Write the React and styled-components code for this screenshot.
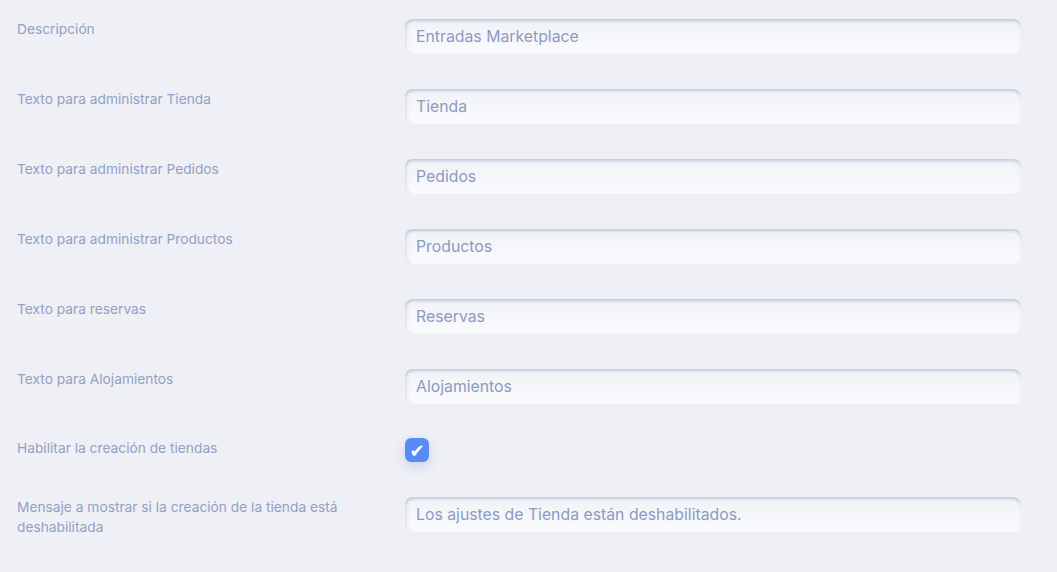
import React from 'react'
import styled, { createGlobalStyle } from 'styled-components'

const GlobalStyle = createGlobalStyle`
  body {
    margin: 0;
    background: #eef0f5;
    font-family: Inter, "Noto Sans", sans-serif;
  }
`

const fields = [
  { label: 'Descripción', value: 'Entradas Marketplace' },
  { label: 'Texto para administrar Tienda', value: 'Tienda' },
  { label: 'Texto para administrar Pedidos', value: 'Pedidos' },
  { label: 'Texto para administrar Productos', value: 'Productos' },
  { label: 'Texto para reservas', value: 'Reservas' },
  { label: 'Texto para Alojamientos', value: 'Alojamientos' },
]

function App() {
  return (
    <Page>
      <GlobalStyle />
      {fields.map((f) => (
        <Row key={f.label}>
          <Label>{f.label}</Label>
          <Input defaultValue={f.value} />
        </Row>
      ))}
      <CheckRow>
        <Label>Habilitar la creación de tiendas</Label>
        <Check>✔</Check>
      </CheckRow>
      <Row>
        <Label>Mensaje a mostrar si la creación de la tienda está deshabilitada</Label>
        <Input defaultValue="Los ajustes de Tienda están deshabilitados." />
      </Row>
    </Page>
  )
}

export default App

const Page = styled.div`
  min-height: 100vh;
  padding: 19px 36px 0 17px;
  box-sizing: border-box;
  display: flex;
  flex-direction: column;
  gap: 35px;
`

const Row = styled.div`
  display: flex;
  align-items: flex-start;
`

const CheckRow = styled(Row)`
  margin-top: -1px;
`

const Label = styled.div`
  width: 388px;
  flex-shrink: 0;
  padding-right: 50px;
  box-sizing: border-box;
  font-size: 13.75px;
  line-height: 20px;
  color: #93a0c4;
`

const Input = styled.input`
  flex: 1;
  height: 35px;
  box-sizing: border-box;
  border: none;
  outline: none;
  border-radius: 8px;
  padding: 0 11px 1px;
  font-family: Inter, "Noto Sans", sans-serif;
  font-size: 15.8px;
  color: #8d9ac0;
  background: linear-gradient(180deg, #f1f2f7 0%, #fafbfd 100%);
  box-shadow: inset 0 3px 3px -1px rgba(165, 175, 208, 0.6),
    inset 3px 0 4px -2px rgba(180, 190, 215, 0.4);
`

const Check = styled.div`
  width: 24px;
  height: 24px;
  border-radius: 6px;
  background: #578cf7;
  color: #fff;
  font-family: "DejaVu Sans", sans-serif;
  font-size: 18px;
  line-height: 25px;
  text-align: center;
  box-shadow: 0 4px 12px rgba(120, 140, 200, 0.3);
`
